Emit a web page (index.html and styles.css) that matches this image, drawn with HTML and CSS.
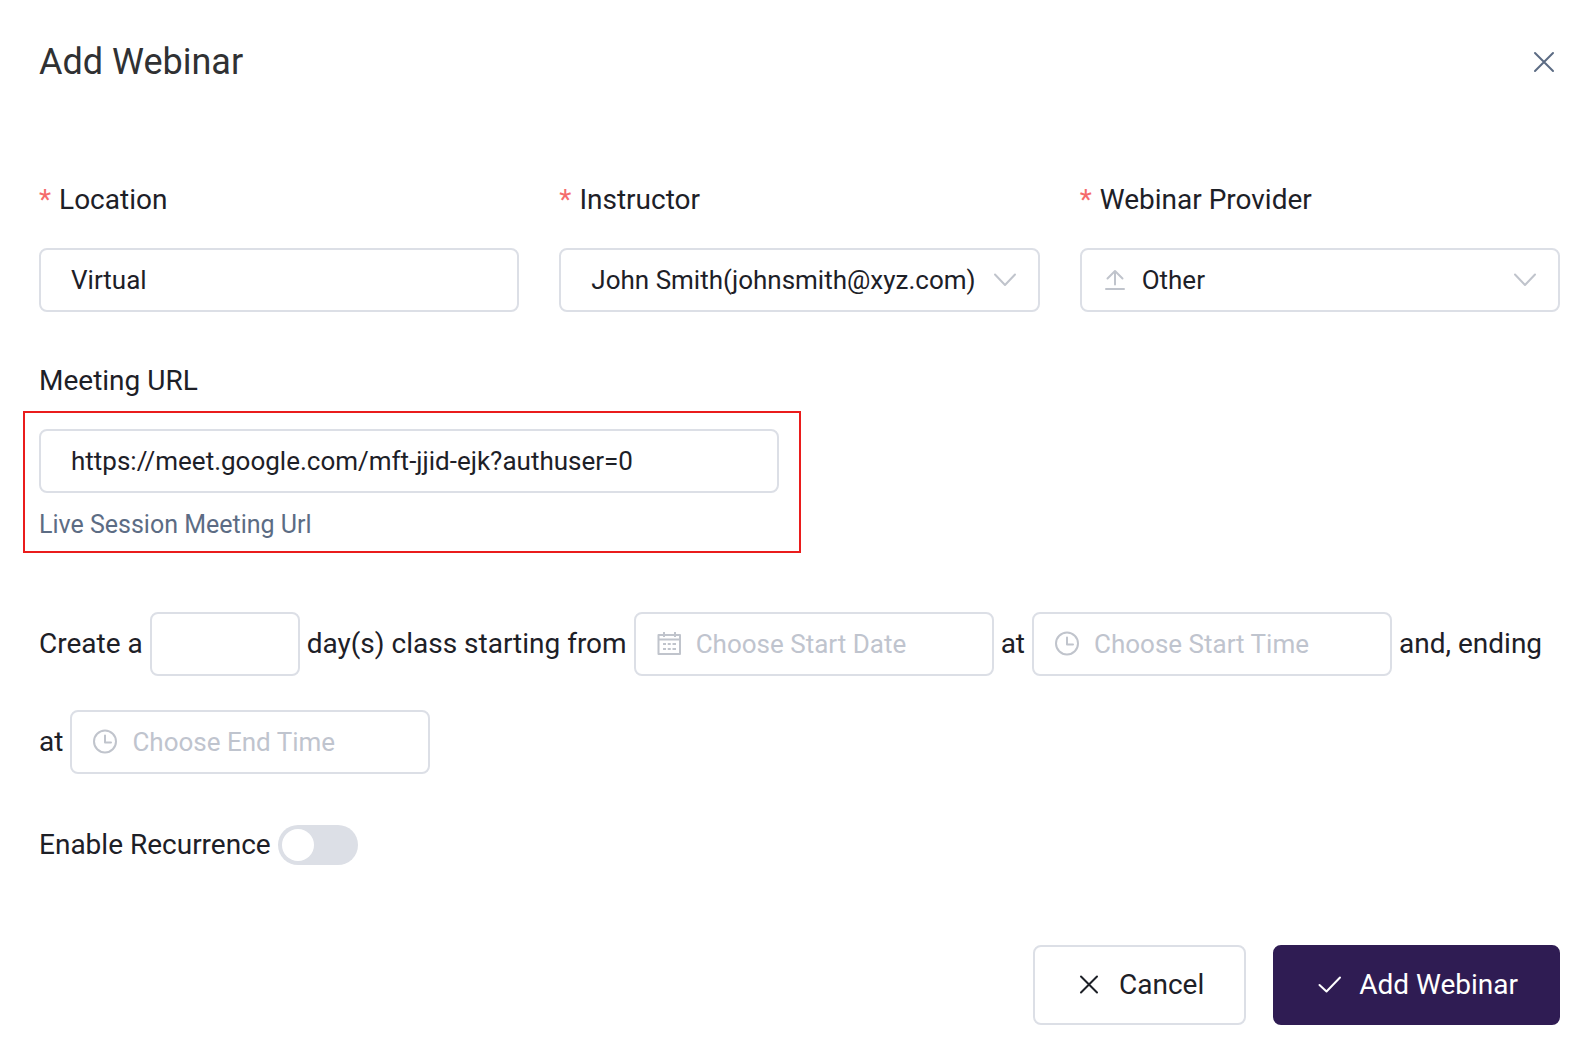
FILE: index.html
```html
<!DOCTYPE html>
<html lang="en">
<head>
<meta charset="utf-8">
<meta name="viewport" content="width=device-width, initial-scale=1">
<title>Add Webinar</title>
<link rel="stylesheet" href="styles.css">
</head>
<body>
<main class="dialog" role="dialog" aria-labelledby="dialog-title">
  <header class="dialog-header">
    <h1 class="dialog-title" id="dialog-title">Add Webinar</h1>
    <button class="close" type="button" aria-label="Close">
      <svg class="icon" viewBox="0 0 28 28"><path d="M5 5l18 18M23 5L5 23"/></svg>
    </button>
  </header>

  <form class="form">
    <div class="row row-three">
      <div class="field">
        <label class="label required" for="location">Location</label>
        <input class="control" id="location" type="text" value="Virtual">
      </div>
      <div class="field">
        <label class="label required" for="instructor">Instructor</label>
        <div class="control-wrap">
          <select class="control control-select" id="instructor"><option>John Smith(johnsmith@xyz.com)</option></select>
          <svg class="icon icon-end" viewBox="0 0 28 28"><path d="M4 8.500l10 10.500L24 8.500"/></svg>
        </div>
      </div>
      <div class="field">
        <label class="label required" for="provider">Webinar Provider</label>
        <div class="control-wrap">
          <svg class="icon icon-start" viewBox="0 0 28 28"><path d="M5 23h18M14 18.500V5.500M6.500 12.500L14 5l7.500 7.500"/></svg>
          <select class="control control-select control-icon" id="provider"><option>Other</option></select>
          <svg class="icon icon-end" viewBox="0 0 28 28"><path d="M4 8.500l10 10.500L24 8.500"/></svg>
        </div>
      </div>
    </div>

    <div class="row row-two">
      <div class="url-field">
        <label class="label" for="url">Meeting URL</label>
        <div class="highlight">
          <input class="control" id="url" type="text" value="https://meet.google.com/mft-jjid-ejk?authuser=0" aria-describedby="url-hint">
          <p class="hint" id="url-hint">Live Session Meeting Url</p>
        </div>
      </div>
    </div>

    <div class="schedule">
      <label for="days">Create a</label>
      <input class="control control-days" id="days" type="text">
      <label for="start-date">day(s) class starting from</label>
      <span class="control-wrap control-picker">
        <svg class="icon icon-start icon-calendar" viewBox="0 0 28 28"><path d="M3.500 5h21.500v19h-21.500zM3.500 9.500h21.500M9 2v5M20 2v5M8 14h3M12.750 14h3M17.500 14h3.500M8 19h3M12.750 19h3M17.500 19h3.500"/></svg>
        <input class="control control-icon" id="start-date" type="text" placeholder="Choose Start Date">
      </span>
      <label for="start-time">at</label>
      <span class="control-wrap control-picker">
        <svg class="icon icon-start" viewBox="0 0 28 28"><circle cx="14" cy="13.500" r="11"/><path d="M14 7.500v7h6"/></svg>
        <input class="control control-icon" id="start-time" type="text" placeholder="Choose Start Time">
      </span>
      <span>and, ending</span>
      <label for="end-time">at</label>
      <span class="control-wrap control-picker">
        <svg class="icon icon-start" viewBox="0 0 28 28"><circle cx="14" cy="13.500" r="11"/><path d="M14 7.500v7h6"/></svg>
        <input class="control control-icon" id="end-time" type="text" placeholder="Choose End Time">
      </span>
    </div>

    <div class="recurrence">
      <label for="recurrence">Enable Recurrence</label>
      <input class="switch" id="recurrence" type="checkbox" role="switch">
    </div>

    <footer class="actions">
      <button class="button" type="button">
        <svg class="icon" viewBox="0 0 28 28"><path d="M6 5.500l16 16M22 5.500L6 21.500"/></svg>
        Cancel
      </button>
      <button class="button button-primary" type="submit">
        <svg class="icon" viewBox="0 0 28 28"><path d="M4.500 14l7 6.500L25 6.500"/></svg>
        Add Webinar
      </button>
    </footer>
  </form>
</main>
</body>
</html>
```
FILE: styles.css
```css
* {
  box-sizing: border-box;
}

body {
  margin: 0;
  background: #fff;
  color: #1d2027;
  font: 28px/40px Roboto, "Liberation Sans", sans-serif;
}

.dialog {
  padding: 40px 30px 35px 39px;
}

.dialog-header {
  display: flex;
  align-items: center;
  justify-content: space-between;
  margin-bottom: 96px;
}

.dialog-title {
  margin: 0;
  color: #303133;
  font-size: 36px;
  font-weight: 400;
  line-height: 44px;
}

.icon {
  width: 28px;
  height: 28px;
  flex: none;
  fill: none;
  stroke: currentColor;
  stroke-width: 2;
  stroke-linecap: round;
  stroke-linejoin: round;
}

.icon-calendar {
  stroke-linecap: butt;
}

.close {
  display: flex;
  padding: 2px;
  border: 0;
  background: none;
  color: #5c6c84;
}

.row {
  display: grid;
  column-gap: 40px;
}

.row-three {
  grid-template-columns: repeat(3, minmax(0, 1fr));
  margin-bottom: 49px;
}

.row-two {
  grid-template-columns: repeat(2, minmax(0, 1fr));
}

.label {
  display: block;
}

.field .label {
  margin-bottom: 28px;
}

.required::before {
  content: "*";
  margin-right: 8px;
  color: #f56c6c;
}

.control {
  display: block;
  width: 100%;
  height: 64px;
  padding: 0 30px;
  border: 2px solid #dcdfe6;
  border-radius: 8px;
  background: #fff;
  color: inherit;
  font: inherit;
  font-size: 26px;
}

.control::placeholder {
  color: #bfc4ce;
  opacity: 1;
}

.control-wrap {
  position: relative;
}

.control-select {
  appearance: none;
  padding-right: 50px;
}

.control-icon {
  padding-left: 60px;
}

.icon-start,
.icon-end {
  position: absolute;
  top: 18px;
  color: #c0c4cc;
}

.icon-start {
  left: 21px;
}

.icon-end {
  right: 21px;
}

.highlight {
  margin: 10px -21px 59px -16px;
  padding: 16px 20px 6px 14px;
  border: 2px solid #ea1c1c;
}

.hint {
  margin: 12px 0 0;
  color: #5c6c84;
  font-size: 25px;
}

.schedule {
  display: flex;
  flex-wrap: wrap;
  align-items: center;
  gap: 34px 7px;
  margin-bottom: 51px;
}

.control-days {
  width: 150px;
}

.control-picker {
  width: 360px;
}

.recurrence {
  display: flex;
  align-items: center;
  gap: 7px;
}

.switch {
  appearance: none;
  width: 80px;
  height: 40px;
  margin: 0;
  padding: 4px;
  border-radius: 20px;
  background: #dcdfe6;
}

.switch::before {
  content: "";
  display: block;
  width: 32px;
  height: 32px;
  border-radius: 50%;
  background: #fff;
}

.switch:checked {
  background: #2f1c53;
}

.switch:checked::before {
  margin-left: auto;
}

.actions {
  display: flex;
  justify-content: flex-end;
  gap: 27px;
  margin-top: 80px;
}

.button {
  display: flex;
  align-items: center;
  gap: 16px;
  height: 80px;
  padding: 0 40px;
  border: 2px solid #dcdfe6;
  border-radius: 8px;
  background: #fff;
  color: inherit;
  font: inherit;
}

.button-primary {
  border-color: #2f1c53;
  background: #2f1c53;
  color: #fff;
}
```
